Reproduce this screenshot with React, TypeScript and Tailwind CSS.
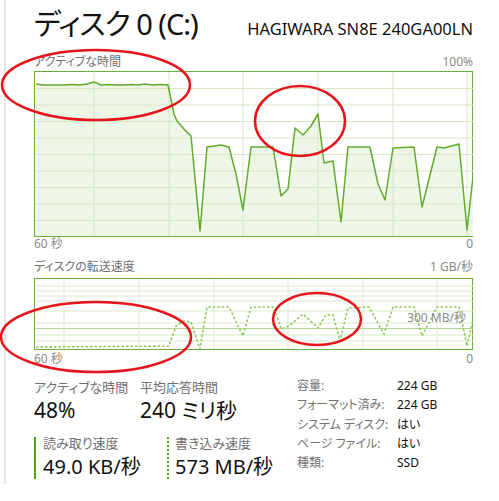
import React from "react";

const activePts: [number, number][] = [
  [1, 12], [8, 13], [15, 13], [22, 13], [30, 13], [37, 12.5], [44, 13], [52, 12], [59, 10],
  [66, 13], [74, 12.5], [81, 13], [89, 13], [96, 12.5], [103, 13], [110, 12], [118, 13],
  [125, 12.5], [133, 13], [139, 42], [142, 49], [149, 57], [156, 64], [165, 159], [172, 75],
  [186, 73], [194, 75], [201, 102], [208, 138], [216, 75], [238, 75], [246, 124], [253, 117],
  [260, 56], [268, 63], [276, 54], [283, 42], [289, 91], [298, 89], [306, 150], [313, 75],
  [335, 75], [343, 112], [350, 128], [358, 76], [379, 75], [387, 135], [402, 75], [409, 76],
  [424, 72], [432, 158], [439, 96],
];

const writePts: [number, number][] = [
  [1, 68], [134, 67], [141, 47], [149, 42], [156, 43], [165, 70], [172, 28], [194, 28],
  [208, 57], [216, 28], [239, 28], [246, 50], [254, 47], [268, 35], [283, 49], [291, 36],
  [298, 36], [305, 62], [313, 29], [334, 28], [349, 55], [358, 28], [379, 28], [387, 57],
  [402, 28], [424, 28], [432, 67], [439, 37],
];

const toStr = (p: [number, number][]) => p.map(([x, y]) => `${x},${y}`).join(" ");

function ActiveChart() {
  const rows = [16.5, 33, 49.5, 66, 82.5, 99, 115.5, 132, 148.5];
  const cols = [59, 134, 208, 283, 358, 432];
  return (
    <div className="h-[166px] border border-[#6aae3a] bg-white">
      <svg width="438" height="164" viewBox="0 0 438 164" className="block">
        <polygon points={`0,164 ${toStr(activePts)} 438,164`} fill="#eef6e7" />
        {rows.map((y) => (
          <line key={y} x1="0" x2="438" y1={y} y2={y} stroke="#d5e8c6" strokeWidth="1" />
        ))}
        {cols.map((x) => (
          <line key={x} x1={x} x2={x} y1="0" y2="164" stroke="#d5e8c6" strokeWidth="1" />
        ))}
        <polyline points={toStr(activePts)} fill="none" stroke="#62ab2c" strokeWidth="1.5" strokeLinejoin="round" />
      </svg>
    </div>
  );
}

function TransferChart() {
  const rows = [7, 12, 17, 22, 32, 44, 56, 62];
  const cols = [29, 104, 179, 253, 328, 402];
  return (
    <div className="relative h-[72px] border border-[#6aae3a] bg-white">
      <svg width="438" height="70" viewBox="0 0 438 70" className="block">
        {rows.map((y) => (
          <line key={y} x1="0" x2="438" y1={y} y2={y} stroke="#d8eacb" strokeWidth="1" />
        ))}
        <line x1="0" x2="438" y1="49.5" y2="49.5" stroke="#b2d698" strokeWidth="1" />
        {cols.map((x) => (
          <line key={x} x1={x} x2={x} y1="0" y2="70" stroke="#d8eacb" strokeWidth="1" />
        ))}
        <polyline points={toStr(writePts)} fill="none" stroke="#8fca58" strokeWidth="1.6" strokeDasharray="2.5 2" />
      </svg>
      <div className="absolute right-[6px] top-[32px] text-[12px] leading-[14px] text-[#8a8a8a]">300 MB/秒</div>
    </div>
  );
}

function InfoRow({ label, value }: { label: string; value: string }) {
  return (
    <div className="flex leading-[19.25px] text-[12px]">
      <div className="w-[100px] text-[#707070]">{label}</div>
      <div className="text-[#111]">{value}</div>
    </div>
  );
}

export default function App() {
  return (
    <div className="relative w-[499px] h-[501px] overflow-hidden bg-white font-['Noto_Sans','Noto_Sans_CJK_JP',sans-serif] [font-feature-settings:'palt'] text-[#111]">
      <div className="ml-[4px] mt-[13px] h-[484px] border-l-2 border-[#e6e6e6] pl-[28px] pr-[26px]">
        <div className="-mt-[13px] h-[48px] flex items-baseline justify-between pt-[4px]">
          <div className="text-[29px] leading-[40px] tracking-[-1px]">ディスク 0 (C:)</div>
          <div className="text-[16.5px] leading-[20px]">HAGIWARA SN8E 240GA00LN</div>
        </div>
        <div className="h-[23px] flex items-end justify-between pb-[2px] text-[12px] leading-[14px] text-[#707070]">
          <span>アクティブな時間</span>
          <span className="text-[#8a8a8a]">100%</span>
        </div>
        <ActiveChart />
        <div className="h-[13px] flex justify-between text-[12px] leading-[14px] text-[#8a8a8a]">
          <span>60 秒</span>
          <span>0</span>
        </div>
        <div className="h-[28px] flex items-end justify-between pb-[4px] text-[12px] leading-[14px] text-[#707070]">
          <span>ディスクの転送速度</span>
          <span className="text-[#8a8a8a]">1 GB/秒</span>
        </div>
        <TransferChart />
        <div className="h-[18px] flex justify-between text-[12px] leading-[18px] text-[#8a8a8a]">
          <span>60 秒</span>
          <span>0</span>
        </div>
        <div className="mt-[8px] flex">
          <div className="w-[263px] pt-[2px]">
            <div className="flex">
              <div className="w-[106px]">
                <div className="text-[13px] leading-[18px] text-[#707070]">アクティブな時間</div>
                <div className="text-[21px] leading-[28px]">48%</div>
              </div>
              <div>
                <div className="text-[13px] leading-[18px] text-[#707070]">平均応答時間</div>
                <div className="text-[21px] leading-[28px]">240 ミリ秒</div>
              </div>
            </div>
            <div className="mt-[13px] flex">
              <div className="w-[133px] border-l-2 border-[#4da60c] pl-[7px]">
                <div className="text-[13px] leading-[12px] text-[#707070]">読み取り速度</div>
                <div className="mt-[6px] text-[20px] leading-[24px]">49.0 KB/秒</div>
              </div>
              <div className="border-l-2 border-dotted border-[#4da60c] pl-[6px]">
                <div className="text-[13px] leading-[12px] text-[#707070]">書き込み速度</div>
                <div className="mt-[6px] text-[20px] leading-[24px]">573 MB/秒</div>
              </div>
            </div>
          </div>
          <div>
            <InfoRow label="容量:" value="224 GB" />
            <InfoRow label="フォーマット済み:" value="224 GB" />
            <InfoRow label="システム ディスク:" value="はい" />
            <InfoRow label="ページ ファイル:" value="はい" />
            <InfoRow label="種類:" value="SSD" />
          </div>
        </div>
      </div>
      <svg className="pointer-events-none absolute inset-0" width="499" height="501" viewBox="0 0 499 501">
        <g fill="none" stroke="#e8141b" strokeWidth="2.5">
          <ellipse cx="96" cy="85" rx="94" ry="35" />
          <ellipse cx="300" cy="121" rx="45" ry="35" />
          <ellipse cx="96" cy="337" rx="95" ry="35" />
          <ellipse cx="317" cy="319" rx="44" ry="26" />
        </g>
      </svg>
    </div>
  );
}
